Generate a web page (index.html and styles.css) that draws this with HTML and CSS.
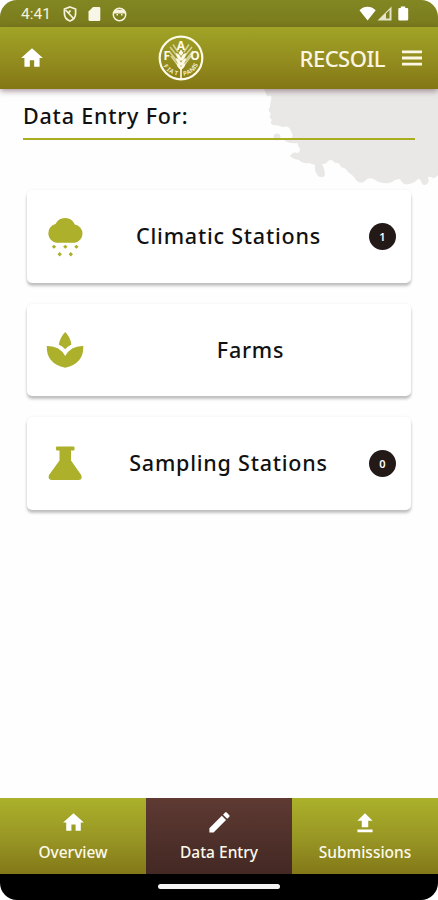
FILE: index.html
```
<!DOCTYPE html>
<html lang="en">
<head>
    <meta charset="UTF-8">
    <meta name="viewport" content="width=device-width, initial-scale=1.0">
    <title>RECSOIL</title>
    <link rel="stylesheet" href="styles.css">
</head>
<body>
<div class="phone">

    <div class="status-bar">
        <span class="time">4:41</span>
        <svg class="shield" width="14" height="16" viewBox="0 0 14 16" fill="none" stroke="#f6f2dc" stroke-width="1.7">
            <path d="M7 1L12.6 3V7.5C12.6 11 10.2 13.8 7 15C3.8 13.8 1.4 11 1.4 7.5V3Z"/>
            <path d="M2.5 4L10.5 12.5M7.5 4.5L5 7.5"/>
        </svg>
        <svg class="sd" width="13" height="16" viewBox="0 0 13 16" fill="#f8f6e6">
            <path d="M5 1H11Q12.3 1 12.3 2.3V13.7Q12.3 15 11 15H1.8Q.5 15 .5 13.7V5.5Z"/>
        </svg>
        <svg class="face" width="15" height="15" viewBox="0 0 15 15" fill="none" stroke="#f6f2dc" stroke-width="1.5">
            <circle cx="7.5" cy="7.5" r="6.2"/>
            <path d="M2 5.5H13M3 3.8H12" stroke-width="2"/>
            <path d="M4.5 7.7H6M9 7.7H10.5"/>
        </svg>
        <svg class="signals" width="52" height="16" viewBox="0 0 52 16" fill="#fff">
            <path d="M.5 4.2C5-.3 12-.3 16.7 4.2L8.6 14.5Z"/>
            <path d="M18.5 14.4L32.5 .6V14.4Z" fill="#e4e4c8"/>
            <path d="M27 7.5L30.5 4V12.5H27Z" fill="#7e7f1e"/>
            <path d="M41.8 .4H46.2V2H48Q49.2 2 49.2 3.2V13.2Q49.2 14.5 48 14.5H40.5Q39.3 14.5 39.3 13.2V3.2Q39.3 2 40.5 2H41.8Z"/>
        </svg>
    </div>

    <header class="app-bar">
        <svg class="home" width="26" height="26" viewBox="0 0 24 24" fill="#fff"><path d="M10 20v-6h4v6h5v-8h3L12 3 2 12h3v8z"/></svg>
        <svg class="logo" width="46" height="46" viewBox="0 0 46 46">
            <circle cx="23" cy="23" r="21.3" fill="none" stroke="#fffbe8" stroke-width="2.2"/>
            <!-- grain stalks on both sides -->
            <g stroke="#d6d094" stroke-width="1.6" fill="none">
                <path d="M12 12L20 22M15 9.5L20 17M11 16L19 26M13 21L19 29M34 12L26 22M31 9.5L26 17M35 16L27 26M33 21L27 29"/>
            </g>
            <!-- central ear -->
            <g fill="#fffbe8">
                <path d="M23 14.5L25.5 18L23 21L20.5 18Z"/>
                <path d="M18 18Q22 19 23 23Q24 19 28 18Q28 23 23 26Q18 23 18 18Z"/>
                <path d="M18 23Q22 24 23 28Q24 24 28 23Q28 28 23 31Q18 28 18 23Z"/>
                <path d="M18.5 28Q22 29 23 32Q24 29 27.5 28Q27.5 32 23 35Q18.5 32 18.5 28Z"/>
                <path d="M22.2 33H23.8V44H22.2Z"/>
            </g>
            <g class="logo-text">
                <text x="23" y="14.5" text-anchor="middle">A</text>
                <text x="8.8" y="24.5" text-anchor="middle">F</text>
                <text x="37" y="24.5" text-anchor="middle">O</text>
            </g>
            <g class="logo-motto">
                <text transform="translate(5.2 31) rotate(55)">F</text>
                <text transform="translate(8.4 35) rotate(42)">I</text>
                <text transform="translate(10.8 37) rotate(30)">A</text>
                <text transform="translate(16 39.8) rotate(14)">T</text>
                <text transform="translate(25.5 40.8) rotate(-10)">P</text>
                <text transform="translate(29.5 39.8) rotate(-24)">A</text>
                <text transform="translate(33.5 37.8) rotate(-38)">N</text>
                <text transform="translate(37 34.5) rotate(-50)">I</text>
                <text transform="translate(38.5 32.5) rotate(-62)">S</text>
            </g>
        </svg>
        <span class="brand">RECSOIL</span>
        <svg class="menu" width="20" height="16" viewBox="0 0 20 16" fill="#fbf7e4"><path d="M0 .5H20V3.3H0ZM0 6.6H20V9.4H0ZM0 12.7H20V15.5H0Z"/></svg>
    </header>

    <main class="content">
        <svg class="splash" width="174" height="100" viewBox="0 0 174 100" fill="#e9e8e7">
            <path d="M0 0L3 7Q9 5 7 11Q6 15 6 18Q3 21 7 25Q4 28 8 31Q5 34 9 36Q14 36 19 38Q25 36 27 42Q30 48 27 50Q34 52 34 57Q38 61 34 64Q29 62 26 67Q29 70 35 71Q39 75 45 74L51 76Q50 82 54 87Q59 90 61 86Q61 80 58 75Q63 75 64 72Q68 69 71 74Q75 73 77 78Q82 79 84 83Q90 87 92 91Q97 97 103 90Q107 88 111 91Q117 95 122 94Q127 95 131 91L136 90Q139 97 145 95Q151 94 154 90Q157 90 158 95Q162 98 165 92Q162 87 167 88Q171 91 174 86V0Z"/>
            <path d="M20 51Q25 55 33 54V50H22Z"/>
            <circle cx="13" cy="48" r="3.5"/>
        </svg>

        <h1 class="title">Data Entry For:</h1>

        <div class="cards">
            <a class="card">
                <svg class="card-icon" width="40" height="42" viewBox="0 0 40 42" fill="#acb02b">
                    <path d="M11.5 27.8A9.6 9.6 0 0 1 10.5 9A10.5 10.5 0 0 1 29.8 9.6A9.2 9.2 0 0 1 29.5 27.8Z"/>
                    <path d="M9 29.8l2.2 2-2.2 2-2.2-2zM20.3 29.8l2.2 2-2.2 2-2.2-2zM31.4 29.8l2.2 2-2.2 2-2.2-2zM14.7 37l2.2 2.2-2.2 2.2-2.2-2.2zM25.8 37l2.2 2.2-2.2 2.2-2.2-2.2z"/>
                </svg>
                <span class="card-label">Climatic Stations</span>
                <span class="badge">1</span>
            </a>
            <a class="card">
                <svg class="card-icon" width="40" height="42" viewBox="0 0 40 42" fill="#acb02b">
                    <path d="M20.2 3Q25.5 8.5 26.4 15.5Q22.5 17.6 20.2 20.2Q17.5 17.4 13.8 15.5Q15 8.5 20.2 3Z"/>
                    <path d="M1.8 17Q14.5 16.5 20.2 27Q26 16.5 38.3 17Q39 34.5 20.2 38.8Q1 34.5 1.8 17Z"/>
                </svg>
                <span class="card-label no-badge">Farms</span>
            </a>
            <a class="card">
                <svg class="card-icon" width="40" height="42" viewBox="0 0 40 42" fill="#acb02b">
                    <path d="M12 4.5H28.5Q29.5 4.500 29.5 5.500V7.300Q29.5 8.500 28.5 8.500H26V18.500L36.2 33Q37.8 37.500 34 38H6.500Q2.500 37.500 4 33L14.500 18.500V8.500H12Q11 8.500 11 7.300V5.500Q11 4.500 12 4.500Z"/>
                </svg>
                <span class="card-label">Sampling Stations</span>
                <span class="badge">0</span>
            </a>
        </div>
    </main>

    <nav class="bottom-nav">
        <a class="nav-item">
            <svg width="25" height="25" viewBox="0 0 24 24" fill="#fff"><path d="M10 20v-6h4v6h5v-8h3L12 3 2 12h3v8z"/></svg>
            <span>Overview</span>
        </a>
        <a class="nav-item active">
            <svg width="27" height="25" viewBox="0 1 24 22.2" fill="#fff"><path d="M3 17.25V21h3.75L17.81 9.94l-3.75-3.75L3 17.25zM20.71 7.04c.39-.39.39-1.02 0-1.41l-2.34-2.34c-.39-.39-1.02-.39-1.41 0l-1.83 1.83 3.75 3.75 1.83-1.83z"/></svg>
            <span>Data Entry</span>
        </a>
        <a class="nav-item">
            <svg width="26" height="26" viewBox="0 0 24 24" fill="#fff"><path d="M9 16h6v-6h4l-7-7-7 7h4zm-4 2h14v2.5H5z"/></svg>
            <span>Submissions</span>
        </a>
    </nav>
    <div class="gesture-bar"><div class="handle"></div></div>

</div>
</body>
</html>
```
FILE: styles.css
```
* {
    box-sizing: border-box;
}
body {
    margin: 0;
    background: #fff;
    font-family: 'Noto Sans', 'Open Sans', sans-serif;
}
.phone {
    width: 438px;
    height: 900px;
    display: flex;
    flex-direction: column;
    overflow: hidden;
    border-radius: 17px;
    background: #fefefe;
}
.status-bar {
    height: 27px;
    flex: none;
    display: flex;
    align-items: center;
    padding: 1px 28px 0 21px;
    background: linear-gradient(#828722, #7a7a1d);
    color: #f6f2dc;
}
.time {
    width: 42px;
    font: 15.5px Roboto, sans-serif;
}
.sd {
    margin-left: 11px;
}
.face {
    margin-left: 11px;
}
.signals {
    margin-left: auto;
    margin-right: -1px;
}
.app-bar {
    height: 62px;
    flex: none;
    display: flex;
    align-items: center;
    position: relative;
    z-index: 1;
    padding: 0 16px 0 19px;
    background: linear-gradient(#a0a426, #918a1e 60%, #837615);
    box-shadow: 0 2px 6px rgba(80, 40, 50, 0.5);
}
.logo {
    margin-left: 113px;
}
.logo-text {
    fill: #fffbe8;
    font: bold 12px 'Noto Sans', sans-serif;
}
.logo-motto {
    fill: #f0ebc4;
    font: bold 6px 'Noto Sans', sans-serif;
}
.brand {
    margin-left: auto;
    font-size: 22px;
    font-weight: 500;
    letter-spacing: -0.5px;
    color: #fbf5e2;
}
.menu {
    margin-left: 17px;
}
.content {
    flex: 1;
    position: relative;
    padding: 0 23px;
}
/* soil stain behind the title */
.splash {
    position: absolute;
    top: 0;
    right: 0;
}
.title {
    position: relative;
    margin: 0;
    height: 51px;
    padding-top: 12px;
    border-bottom: 2px solid #a9ad20;
    font-size: 21.5px;
    line-height: 30px;
    font-weight: 500;
    letter-spacing: 0.8px;
    color: #111;
}
.cards {
    position: relative;
    display: flex;
    flex-direction: column;
    gap: 21px;
    padding: 50px 4px 0;
}
.card {
    height: 92.5px;
    display: flex;
    align-items: center;
    padding: 0 15px 0 18px;
    border-radius: 5px;
    background: #fff;
    box-shadow: 0 3px 3px rgba(0, 0, 0, 0.24), 0 0 3px rgba(0, 0, 0, 0.06);
}
.card-label {
    flex: 1;
    text-align: center;
    font-size: 21.5px;
    line-height: 28px;
    font-weight: 500;
    letter-spacing: 0.78px;
    color: #111;
    padding-left: 3px;
}
.card-label.no-badge {
    padding-left: 20px;
}
.badge {
    width: 27px;
    height: 27px;
    border-radius: 50%;
    background: #231917;
    color: #fff;
    font-size: 11px;
    font-weight: 600;
    line-height: 27px;
    text-align: center;
}
.bottom-nav {
    height: 76px;
    flex: none;
    display: grid;
    grid-template-columns: repeat(3, 1fr);
}
.nav-item {
    display: flex;
    flex-direction: column;
    align-items: center;
    justify-content: space-between;
    padding: 12px 0 12px;
    background: linear-gradient(#abb12a, #979524 55%, #837818);
    color: #fdf9ea;
    font-size: 15.5px;
    line-height: 20px;
    font-weight: 500;
}
.nav-item.active {
    background: linear-gradient(#5e3a33, #432823);
}
.gesture-bar {
    height: 26px;
    flex: none;
    display: flex;
    justify-content: center;
    padding-top: 10px;
    background: #000;
}
.handle {
    width: 122px;
    height: 5px;
    border-radius: 3px;
    background: #f3f3f3;
}
```
